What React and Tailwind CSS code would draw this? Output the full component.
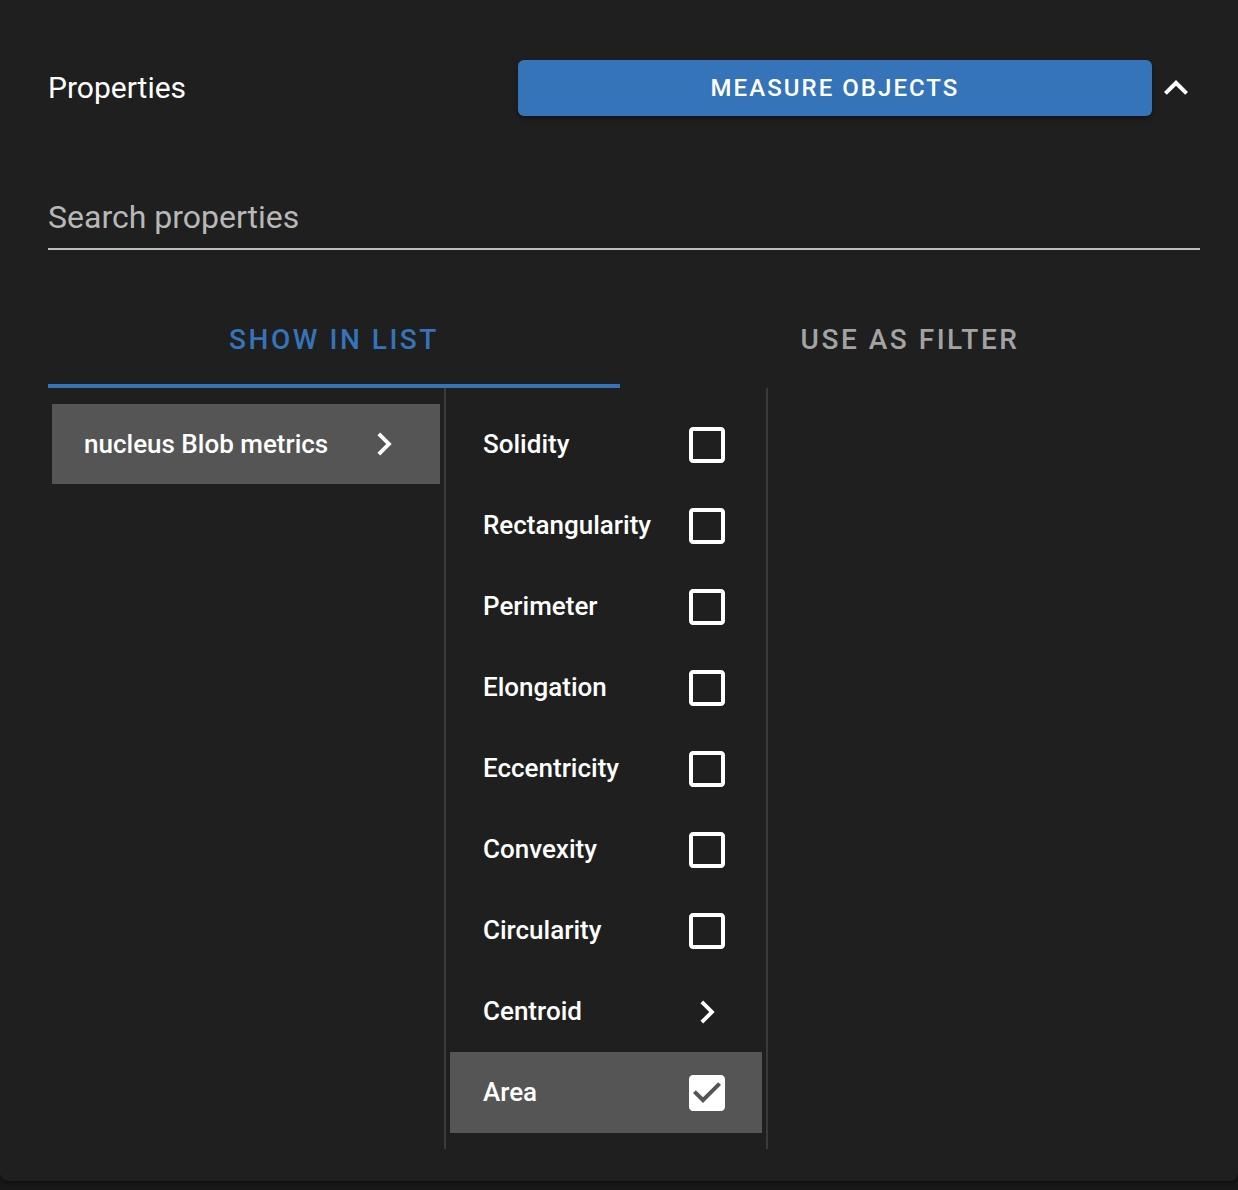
import React from "react";

const font = { fontFamily: "Roboto, 'Noto Sans', sans-serif" };

function ChevronRight({ className }) {
  return (
    <svg viewBox="0 0 24 24" className={className} fill="currentColor">
      <path d="M10 6L8.59 7.41 13.17 12l-4.58 4.59L10 18l6-6z" />
    </svg>
  );
}

function ExpandLess({ className }) {
  return (
    <svg viewBox="0 0 24 24" className={className} fill="currentColor">
      <path d="M12 8l-6 6 1.41 1.41L12 10.83l4.59 4.58L18 14z" />
    </svg>
  );
}

function BoxOutline({ className }) {
  return (
    <svg viewBox="0 0 24 24" className={className} fill="currentColor">
      <path d="M19 5v14H5V5h14m0-2H5c-1.1 0-2 .9-2 2v14c0 1.1.9 2 2 2h14c1.1 0 2-.9 2-2V5c0-1.1-.9-2-2-2z" />
    </svg>
  );
}

function BoxChecked({ className }) {
  return (
    <svg viewBox="0 0 24 24" className={className} fill="currentColor">
      <path d="M19 3H5c-1.11 0-2 .9-2 2v14c0 1.1.89 2 2 2h14c1.11 0 2-.9 2-2V5c0-1.1-.89-2-2-2zm-9 14l-5-5 1.41-1.41L10 14.17l7.59-7.59L19 8l-9 9z" />
    </svg>
  );
}

const items = [
  { name: "Solidity", type: "box" },
  { name: "Rectangularity", type: "box" },
  { name: "Perimeter", type: "box" },
  { name: "Elongation", type: "box" },
  { name: "Eccentricity", type: "box" },
  { name: "Convexity", type: "box" },
  { name: "Circularity", type: "box" },
  { name: "Centroid", type: "chevron" },
  { name: "Area", type: "checked" },
];

export default function App() {
  return (
    <div className="min-h-[1190px] w-full bg-[#191919]" style={font}>
      <div className="bg-[#1f1f1f] rounded-b-lg shadow-[0_2px_6px_rgba(0,0,0,0.5)] pl-12 pr-[38px] pt-[60px] pb-[32px]">
        {/* Header */}
        <div className="flex items-center justify-between h-[56px]">
          <div className="text-[30px] leading-[36px] text-white font-normal">Properties</div>
          <div className="flex items-center">
            <button className="w-[634px] h-[56px] rounded-[6px] bg-[#3574b9] text-white text-[24px] font-medium tracking-[0.085em] uppercase shadow-[0_3px_4px_rgba(0,0,0,0.35)]">
              Measure Objects
            </button>
            <div className="w-12 h-12 flex items-center justify-center text-white">
              <ExpandLess className="w-12 h-12" />
            </div>
          </div>
        </div>

        {/* Search */}
        <div className="mt-[83px] border-b-2 border-[#bdbdbd] pb-3">
          <div className="text-[32px] leading-[37px] text-[#b8b8b8]">Search properties</div>
        </div>

        {/* Tabs */}
        <div className="mt-[46px] flex">
          <div className="w-[572px] flex flex-col">
            <div className="h-[88px] flex items-center justify-center text-[28px] font-medium tracking-[0.09em] text-[#3574b9]">
              SHOW IN LIST
            </div>
            <div className="h-1 bg-[#3574b9]" />
          </div>
          <div className="flex-1 flex flex-col">
            <div className="h-[88px] flex items-center justify-center text-[28px] font-medium tracking-[0.09em] text-[#a3a3a3]">
              USE AS FILTER
            </div>
            <div className="h-1" />
          </div>
        </div>

        {/* Columns */}
        <div className="flex">
          <div className="w-[396px] px-1 pt-4">
            <div className="h-[80px] bg-[#555555] flex items-center justify-between pl-8 pr-[33px] text-white">
              <span className="text-[26px] font-medium">nucleus Blob metrics</span>
              <ChevronRight className="w-[46px] h-[46px]" />
            </div>
          </div>
          <div className="w-[324px] border-x-2 border-[#3a3a3a] px-1 py-4">
            {items.map((it) => (
              <div
                key={it.name}
                className={
                  "h-[81px] flex items-center justify-between pl-[33px] pr-[31px] text-white " +
                  (it.type === "checked" ? "bg-[#555555]" : "")
                }
              >
                <span className="text-[26px] font-medium">{it.name}</span>
                <div className="w-12 h-12 flex items-center justify-center">
                  {it.type === "box" && <BoxOutline className="w-12 h-12" />}
                  {it.type === "checked" && <BoxChecked className="w-12 h-12" />}
                  {it.type === "chevron" && <ChevronRight className="w-[46px] h-[46px]" />}
                </div>
              </div>
            ))}
          </div>
        </div>
      </div>
    </div>
  );
}
